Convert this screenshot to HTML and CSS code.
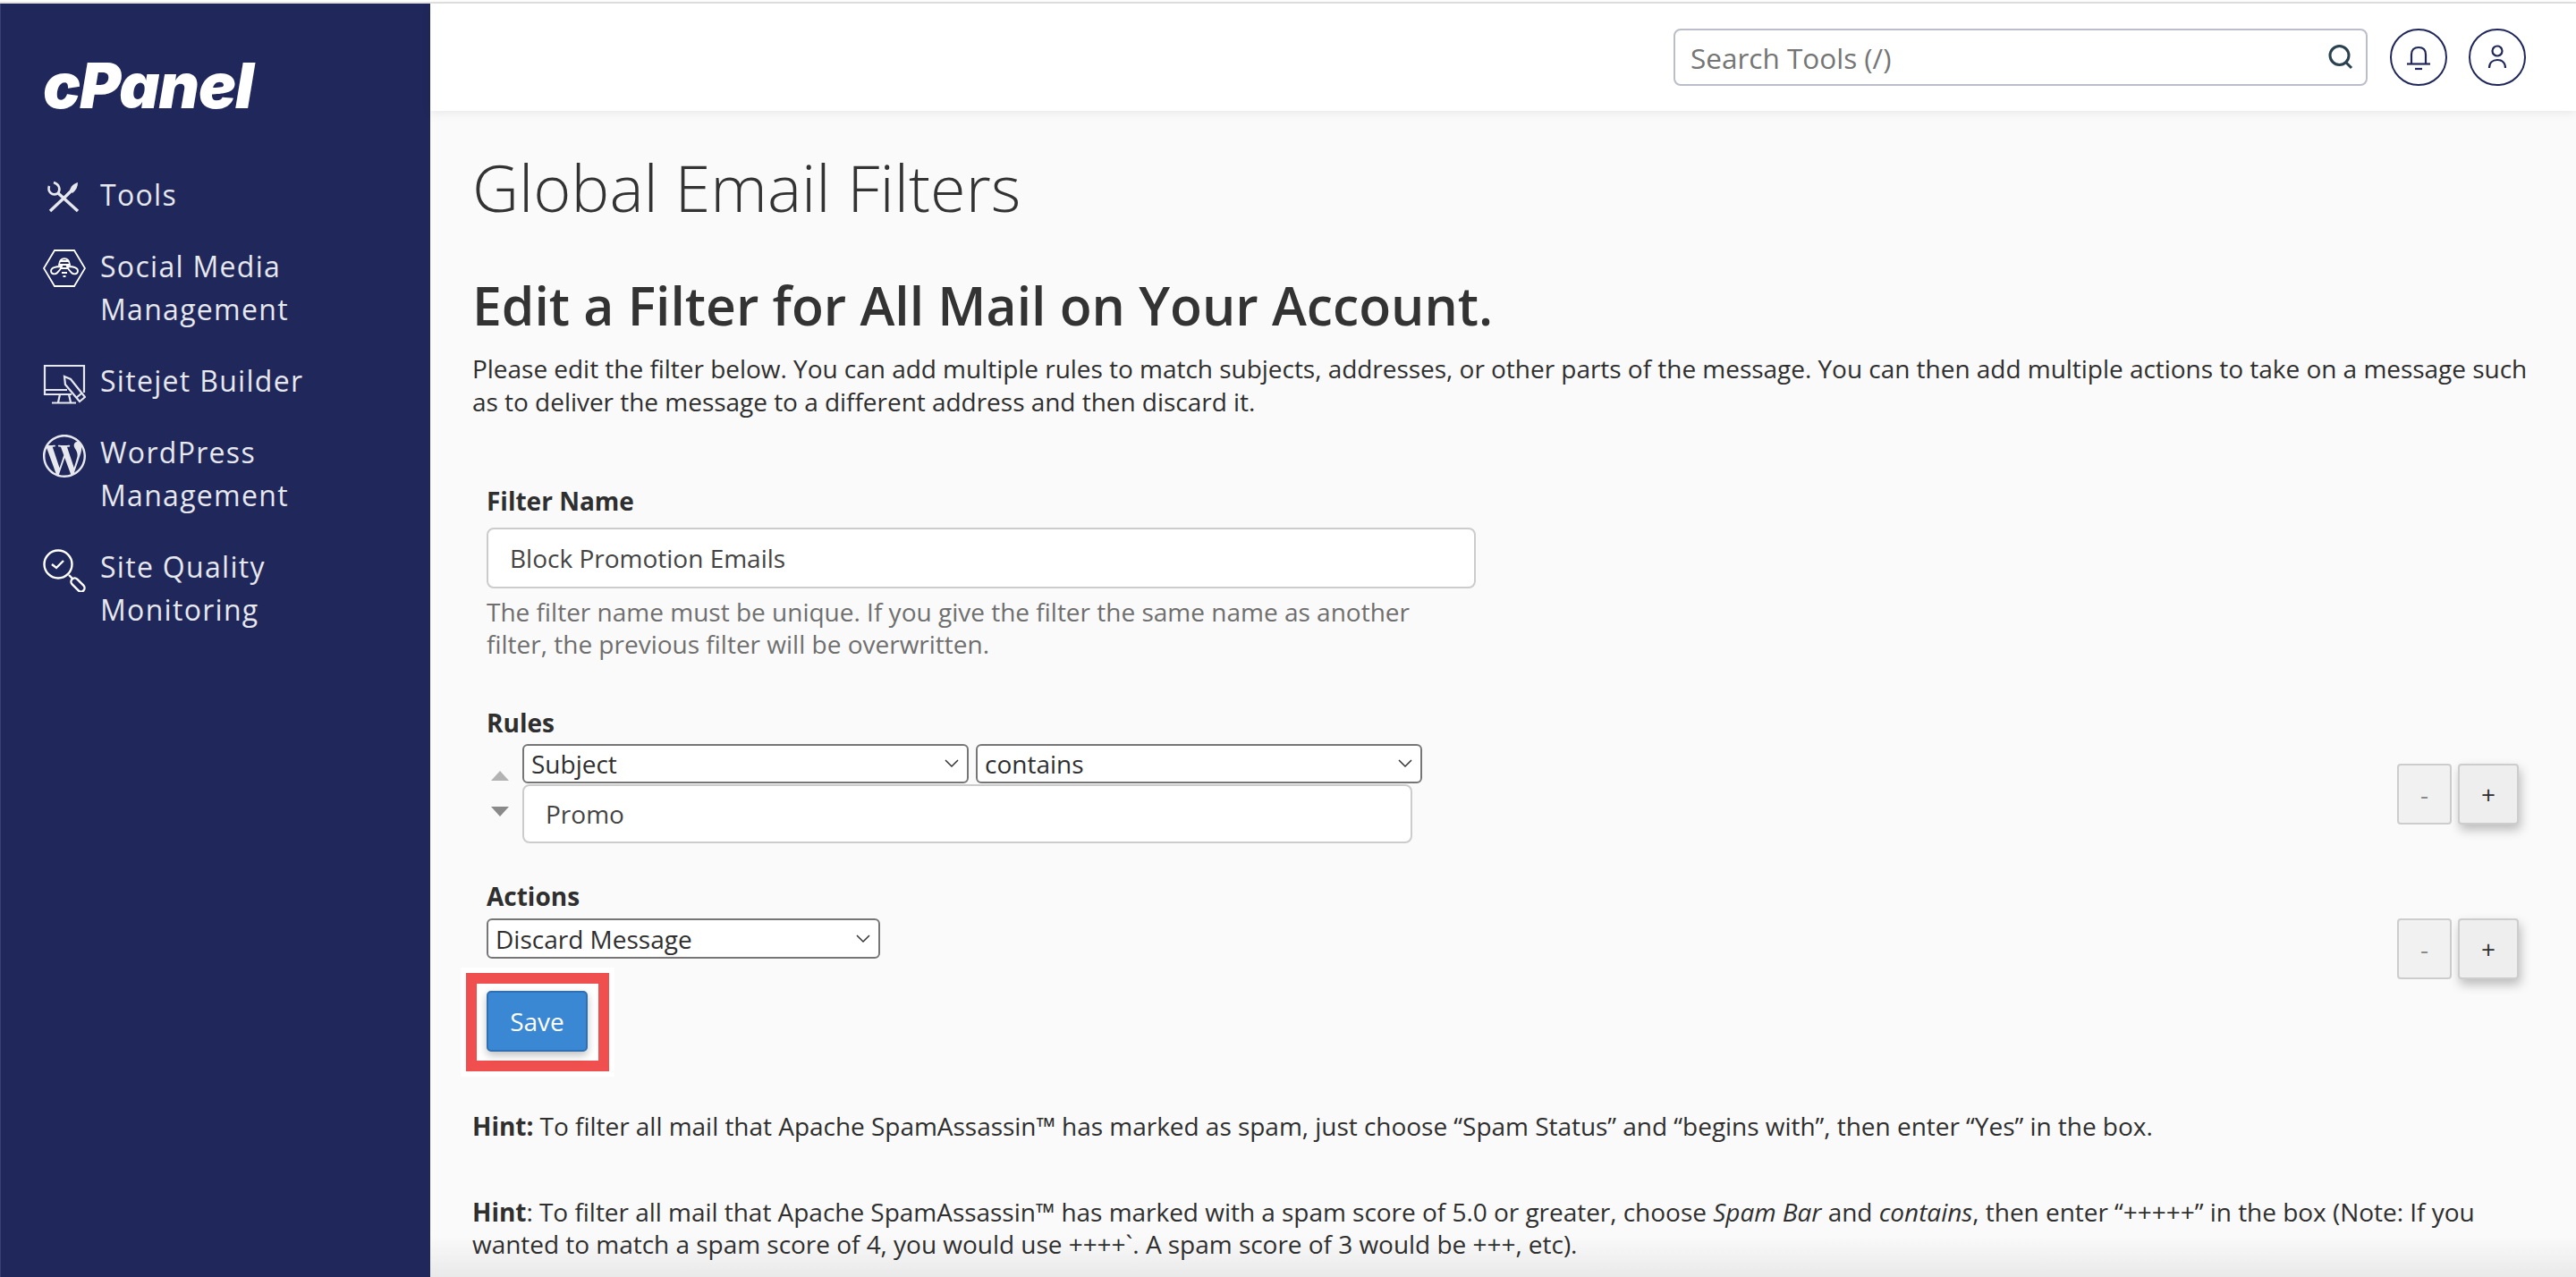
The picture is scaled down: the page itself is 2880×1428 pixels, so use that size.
FILE: index.html
```html
<!DOCTYPE html>
<html lang="en">
<head>
    <meta charset="UTF-8">
    <title>Global Email Filters</title>
    <link rel="stylesheet" href="styles.css">
</head>
<body>
    <div class="top-line"></div>
    <div class="app">
        <aside class="sidebar">
            <div class="logo"><span class="logo-text">cPanel</span></div>
            <nav class="nav">
                <a class="nav-item">
                    <svg class="nav-icon" viewBox="0 0 48 48" fill="none" stroke="#e6e8ee" stroke-width="2.600">
                        <path d="M39 38L17 18" stroke-width="3.400"/>
                        <path d="M7 10c-2 6 3 12 10 8M17 18c3-5 1-10-5-12"/>
                        <path d="M8 38l18-17M26 21l6-6" stroke-width="3.400"/>
                        <path d="M30 15c1-5 5-8 9-9 0 5-2 9-6 12z" fill="#e6e8ee" stroke="none"/>
                    </svg>
                    <span>Tools</span>
                </a>
                <a class="nav-item">
                    <svg class="nav-icon" viewBox="0 0 48 48" fill="none" stroke="#fff" stroke-width="1.800">
                        <path d="M13 2h22l12 20-12 20H13L1 22z"/>
                        <path d="M18 18c1-9 11-9 12 0zM19 14h10"/>
                        <path d="M21 20C14 20 9 21 9 25c0 4 5 4 7 2 2-2 4-4 5-7zM27 20c7 0 12 1 12 5 0 4-5 4-7 2-2-2-4-4-5-7z"/>
                        <path d="M20 22h8M21 27h6M22.500 31h3"/>
                    </svg>
                    <span>Social Media<br>Management</span>
                </a>
                <a class="nav-item">
                    <svg class="nav-icon" viewBox="0 0 48 48" fill="none" stroke="#e6e8ee" stroke-width="2.200">
                        <path d="M46 33V3H2v32h30"/>
                        <path d="M2 30h25M19 35l-2 9M29 35l2 9M10 44.500h27"/>
                        <path d="M24 15l7 3 16 20-6 5-16-19z" fill="#20275a"/>
                        <path d="M37 39l6-5"/>
                    </svg>
                    <span>Sitejet Builder</span>
                </a>
                <a class="nav-item">
                    <svg class="nav-icon" viewBox="0 0 24 24" fill="#e6e8ee">
                        <path d="M21.469 6.825c.84 1.537 1.318 3.3 1.318 5.175 0 3.979-2.156 7.456-5.363 9.325l3.295-9.527c.615-1.54.82-2.771.82-3.864 0-.405-.026-.78-.07-1.11m-7.981.105c.647-.03 1.232-.105 1.232-.105.582-.075.514-.93-.067-.899 0 0-1.755.135-2.88.135-1.064 0-2.85-.15-2.85-.15-.585-.03-.661.855-.075.885 0 0 .54.061 1.125.09l1.68 4.605-2.37 7.08L5.354 6.9c.649-.03 1.234-.1 1.234-.1.585-.075.516-.93-.065-.896 0 0-1.746.138-2.874.138-.2 0-.438-.008-.69-.015C4.911 3.15 8.235 1.215 12 1.215c2.809 0 5.365 1.072 7.286 2.833-.046-.003-.091-.009-.141-.009-1.06 0-1.812.923-1.812 1.914 0 .89.513 1.643 1.06 2.531.411.72.89 1.643.89 2.977 0 .915-.354 1.994-.821 3.479l-1.075 3.585-3.9-11.61.001.014zM12 22.784c-1.059 0-2.081-.153-3.048-.437l3.237-9.406 3.315 9.087c.024.053.05.101.078.149-1.12.393-2.325.609-3.582.609M1.211 12c0-1.564.336-3.05.935-4.39L7.29 21.709C3.694 19.96 1.212 16.271 1.211 12M12 0C5.385 0 0 5.385 0 12s5.385 12 12 12 12-5.385 12-12S18.615 0 12 0"/>
                    </svg>
                    <span>WordPress<br>Management</span>
                </a>
                <a class="nav-item">
                    <svg class="nav-icon" viewBox="0 0 48 48" fill="none" stroke="#fff" stroke-width="2.400">
                        <circle cx="17" cy="17" r="15.500"/>
                        <path d="M10 17l5 4 8-8"/>
                        <path d="M29 29l4 4"/>
                        <rect x="30" y="36" width="18" height="8" rx="4" transform="rotate(45 39 40)"/>
                    </svg>
                    <span>Site Quality<br>Monitoring</span>
                </a>
            </nav>
        </aside>

        <div class="main">
            <header class="topbar">
                <div class="search">
                    <input class="search-input" type="text" placeholder="Search Tools (/)">
                    <svg class="search-icon" viewBox="0 0 32 32" fill="none" stroke="#2a4250" stroke-width="3">
                        <circle cx="14.500" cy="14" r="10.500"/>
                        <path d="M22 22l6 6"/>
                    </svg>
                </div>
                <div class="round-btn">
                    <svg viewBox="0 0 32 32" width="32" height="32" fill="none" stroke="#20275a" stroke-width="2.200">
                        <path d="M8 23V13c0-5 3-8 8-8s8 3 8 8v10"/>
                        <path d="M3 23.500h26"/>
                        <path d="M12 29h8"/>
                    </svg>
                </div>
                <div class="round-btn">
                    <svg viewBox="0 0 32 32" width="32" height="32" fill="none" stroke="#20275a" stroke-width="2.200">
                        <circle cx="16" cy="9" r="5.500"/>
                        <path d="M7 28c0-6 4-9 9-9s9 3 9 9"/>
                    </svg>
                </div>
            </header>

            <main class="content">
                <h1 class="page-title">Global Email Filters</h1>
                <h2 class="sub-title">Edit a Filter for All Mail on Your Account.</h2>
                <p class="intro">Please edit the filter below. You can add multiple rules to match subjects, addresses, or other parts of the message. You can then add multiple actions to take on a message such as to deliver the message to a different address and then discard it.</p>

                <form class="filter-form">
                    <div class="field name-field">
                        <label class="field-label" for="filter-name">Filter Name</label>
                        <input class="text-input" id="filter-name" type="text" value="Block Promotion Emails">
                        <div class="help-text">The filter name must be unique. If you give the filter the same name as another filter, the previous filter will be overwritten.</div>
                    </div>

                    <div class="field-label rules-label">Rules</div>
                    <div class="row rule-row">
                        <div class="rule-left">
                            <div class="arrows">
                                <span class="arrow-up"></span>
                                <span class="arrow-down"></span>
                            </div>
                            <div class="rule-fields">
                                <div class="rule-selects">
                                    <select class="select rule-select"><option>Subject</option></select>
                                    <select class="select rule-select"><option>contains</option></select>
                                </div>
                                <input class="text-input rule-input" type="text" value="Promo">
                            </div>
                        </div>
                        <div class="row-btns">
                            <button type="button" class="small-btn minus">-</button>
                            <button type="button" class="small-btn plus">+</button>
                        </div>
                    </div>

                    <div class="field-label actions-label">Actions</div>
                    <div class="row action-row">
                        <select class="select action-select"><option>Discard Message</option></select>
                        <div class="row-btns">
                            <button type="button" class="small-btn minus">-</button>
                            <button type="button" class="small-btn plus">+</button>
                        </div>
                    </div>

                    <div class="save-wrap">
                        <button type="button" class="save-btn">Save</button>
                    </div>
                </form>

                <p class="hint hint-first"><b>Hint:</b> To filter all mail that Apache SpamAssassin™ has marked as spam, just choose “Spam Status” and “begins with”, then enter “Yes” in the box.</p>
                <p class="hint"><b>Hint</b>: To filter all mail that Apache SpamAssassin™ has marked with a spam score of 5.0 or greater, choose <i>Spam Bar</i> and <i>contains</i>, then enter “+++++” in the box (Note: If you wanted to match a spam score of 4, you would use ++++`. A spam score of 3 would be +++, etc).</p>
            </main>
            <div class="bottom-shade"></div>
        </div>
    </div>
</body>
</html>
```

FILE: styles.css
```css
* {
    box-sizing: border-box;
}

html, body {
    height: 100%;
}

body {
    margin: 0;
    overflow: hidden;
    display: flex;
    flex-direction: column;
    font-family: "Open Sans", sans-serif;
    color: #2f2f2f;
    background-color: #fafafa;
}

.top-line {
    height: 4px;
    flex: none;
    background-color: #fff;
    border-bottom: 2px solid #e2e2e2;
}

.app {
    flex: 1;
    min-height: 0;
    display: flex;
}

/* Sidebar */
.sidebar {
    width: 481px;
    flex: none;
    padding: 64px 0 0 47px;
    background-color: #20275a;
    border-left: 1px solid #3a4170;
}

.logo {
    height: 56px;
    display: flex;
    align-items: center;
}

.logo-text {
    font-family: Inter, sans-serif;
    font-size: 70px;
    font-weight: 900;
    font-style: italic;
    letter-spacing: -1px;
    line-height: 56px;
    color: #fff;
}

.nav {
    margin-top: 70px;
    display: flex;
    flex-direction: column;
    gap: 32px;
}

.nav-item {
    display: flex;
    gap: 16px;
    font-size: 32px;
    line-height: 48px;
    letter-spacing: 1.300px;
    color: #e6e8ee;
}

.nav-icon {
    width: 48px;
    height: 48px;
    flex: none;
    margin-top: 4px;
    margin-bottom: -4px;
}

/* Top bar */
.main {
    flex: 1;
    min-width: 0;
    position: relative;
    display: flex;
    flex-direction: column;
}

.topbar {
    height: 120px;
    flex: none;
    display: flex;
    justify-content: flex-end;
    align-items: center;
    gap: 24px;
    padding: 0 56px 0 0;
    background-color: #fff;
    box-shadow: 0 2px 10px rgba(0, 0, 0, 0.08);
}

.search {
    width: 776px;
    height: 64px;
    margin-right: 1px;
    display: flex;
    align-items: center;
    padding: 0 12px 0 17px;
    border: 2px solid #bbbdcb;
    border-radius: 8px;
}

.search-input {
    flex: 1;
    border: none;
    outline: none;
    padding: 0;
    font-family: inherit;
    font-size: 31.500px;
}

.search-input::placeholder {
    color: #757575;
    opacity: 1;
}

.search-icon {
    width: 32px;
    height: 32px;
}

.round-btn {
    width: 64px;
    height: 64px;
    display: flex;
    align-items: center;
    justify-content: center;
    border: 2px solid #20275a;
    border-radius: 50%;
}

/* Content */
.content {
    position: relative;
    z-index: 1;
    flex: 1;
    padding: 0 47px;
    overflow: hidden;
}

.page-title {
    margin: 40px 0 0;
    font-size: 72px;
    font-weight: 300;
    line-height: 90px;
    color: #333;
}

.sub-title {
    margin: 44px 0 0;
    font-size: 58.800px;
    font-weight: 600;
    line-height: 86px;
    color: #333;
}

.intro {
    margin: 10px 0 0;
    font-size: 28px;
    line-height: 37px;
    letter-spacing: -0.030px;
}

.filter-form {
    margin-top: 74px;
    padding-left: 16px;
}

.field-label {
    display: block;
    font-size: 28px;
    font-weight: 700;
    line-height: 36px;
}

.text-input {
    display: block;
    width: 1106px;
    height: 68px;
    margin-top: 12px;
    padding: 0 24px;
    border: 2px solid #cccccc;
    border-radius: 8px;
    background-color: #fff;
    font-family: inherit;
    font-size: 28px;
    color: #444;
    outline: none;
}

.help-text {
    width: 1106px;
    margin-top: 8px;
    font-size: 28px;
    line-height: 36px;
    color: #6f6f6f;
}

.rules-label {
    margin-top: 52px;
}

.row {
    display: flex;
    justify-content: space-between;
    padding-right: 17px;
}

.rule-row {
    margin-top: 6px;
    align-items: center;
}

.rule-left {
    display: flex;
    align-items: center;
    gap: 15px;
}

.arrows {
    display: flex;
    flex-direction: column;
    gap: 29px;
    padding-left: 5px;
}

.arrow-up, .arrow-down {
    width: 0;
    height: 0;
    border-left: 10px solid transparent;
    border-right: 10px solid transparent;
}

.arrow-up {
    border-bottom: 11px solid #b3b3b3;
}

.arrow-down {
    border-top: 11px solid #8a8a8a;
}

.rule-fields {
    display: flex;
    flex-direction: column;
}

.rule-selects {
    display: flex;
    gap: 8px;
}

.select {
    height: 44px;
    padding: 0 8px;
    appearance: none;
    border: 2px solid #767676;
    border-radius: 6px;
    background: #fff url("data:image/svg+xml,%3Csvg xmlns='http://www.w3.org/2000/svg' width='16' height='10' fill='none' stroke='%23333' stroke-width='1.500'%3E%3Cpath d='M1 1l7 7 7-7'/%3E%3C/svg%3E") no-repeat right 9px center;
    font-family: inherit;
    font-size: 28px;
    color: #2f2f2f;
}

.rule-select {
    width: 499px;
}

.rule-input {
    width: 995px;
    height: 66px;
    margin-top: 1px;
}

.actions-label {
    margin-top: 41px;
}

.action-row {
    margin-top: 7px;
    align-items: flex-start;
}

.action-select {
    width: 440px;
    height: 45px;
}

.row-btns {
    display: flex;
    gap: 7px;
}

.small-btn {
    height: 68px;
    border: 2px solid #cdcdcd;
    border-radius: 4px;
    background-color: #f1f1f1;
    font-family: inherit;
    font-size: 28px;
    padding: 0;
}

.small-btn.minus {
    width: 61px;
    color: #8a8a8a;
}

.small-btn.plus {
    width: 68px;
    color: #2f2f2f;
    background-color: #eeeeee;
    box-shadow: 2px 6px 12px rgba(0, 0, 0, 0.25);
}

.save-wrap {
    position: relative;
    margin-top: 13px;
}

/* red box around the button */
.save-wrap::before {
    content: "";
    box-sizing: border-box;
    position: absolute;
    left: -23px;
    top: -20px;
    width: 160px;
    height: 110px;
    border: 12px solid #ef4f4f;
    outline: 6px solid #fff;
    background-color: #fff;
}

.save-btn {
    position: relative;
    display: block;
    width: 113px;
    height: 68px;
    padding: 0;
    border: 2px solid #2f6fb3;
    border-radius: 5px;
    background-color: #3a87d3;
    box-shadow: 0 4px 10px rgba(0, 0, 0, 0.25);
    font-family: inherit;
    font-size: 28px;
    color: #fff;
}

.hint {
    margin: 60px 0 0;
    font-size: 28px;
    line-height: 36px;
    letter-spacing: -0.030px;
}

.hint-first {
    margin-top: 65px;
}

.bottom-shade {
    position: absolute;
    left: 0;
    right: 0;
    bottom: 0;
    height: 46px;
    background: linear-gradient(to bottom, rgba(235, 235, 235, 0), #e9e9e9);
    pointer-events: none;
}
```
